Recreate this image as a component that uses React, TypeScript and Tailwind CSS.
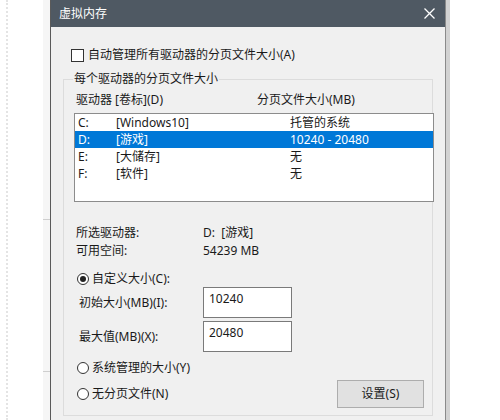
import { ReactNode } from "react";

const drives = [
  { letter: "C:", label: "[Windows10]", size: "托管的系统" },
  { letter: "D:", label: "[游戏]", size: "10240 - 20480", selected: true },
  { letter: "E:", label: "[大储存]", size: "无" },
  { letter: "F:", label: "[软件]", size: "无" },
];

const Radio = ({ checked, children }: { checked?: boolean; children: ReactNode }) => (
  <div className="flex items-center h-[16px]">
    <span className="w-[12px] h-[12px] rounded-full border border-[#333] bg-white flex items-center justify-center">
      {checked && <span className="w-[6px] h-[6px] rounded-full bg-[#222]" />}
    </span>
    <span className="ml-[3px]">{children}</span>
  </div>
);

const SizeField = ({ label, value }: { label: string; value: string }) => (
  <div className="flex items-center pl-[15px]">
    <span className="w-[124px]">{label}</span>
    <div className="w-[89px] h-[31px] border border-[#7a7a7a] bg-white pl-[5px] pt-[3px] leading-[16px]">
      {value}
    </div>
  </div>
);

export default function App() {
  return (
    <div className="w-[500px] h-[420px] bg-white flex overflow-hidden text-[12px] leading-[16px] text-[#1a1a1a] font-['Noto_Sans','Noto_Sans_CJK_SC',sans-serif]">
      {/* page edge behind the dialog */}
      <div className="w-[50px] flex">
        <div className="w-[6px]" />
        <div className="w-[37px] border-l-2 border-dotted border-[#e4e4e4]" />
        <div className="w-[7px] bg-[#f6f6f6] flex flex-col">
          <div className="h-[219px]" />
          <div className="h-[1px] bg-[#cfcfcf]" />
          <div className="h-[151px]" />
          <div className="h-[1px] bg-[#cfcfcf]" />
        </div>
      </div>

      {/* dialog */}
      <div className="w-[395px] border-l border-[#5a5a5a] bg-[#f0f0f0] flex flex-col">
        <div className="h-[27px] bg-[#4f5963] flex items-center justify-between pl-[8px] pr-[10px] text-white">
          <span>虚拟内存</span>
          <svg width="11" height="11" viewBox="0 0 11 11" className="mr-[0px]">
            <path d="M0.5 0.5 L10.5 10.5 M10.5 0.5 L0.5 10.5" stroke="#fff" strokeWidth="1.3" />
          </svg>
        </div>

        <div className="flex items-center h-[16px] mt-[20px] ml-[20px]">
          <span className="w-[13px] h-[13px] border border-[#333] bg-white" />
          <span className="ml-[4px]">自动管理所有驱动器的分页文件大小(A)</span>
        </div>

        {/* group box */}
        <div className="relative ml-[12px] mt-[16px] w-[370px] h-[337px] border border-[#dcdcdc]">
          <span className="absolute -top-[9px] left-[9px] px-[1px] bg-[#f0f0f0]">
            每个驱动器的分页文件大小
          </span>

          <div className="flex pl-[12px] pt-[12px]">
            <span className="w-[181px]">驱动器 [卷标](D)</span>
            <span>分页文件大小(MB)</span>
          </div>

          <div className="ml-[10px] mt-[5px] w-[360px] h-[89px] border border-[#8c8c8c] bg-white">
            {drives.map((d) => (
              <div
                key={d.letter}
                className={`flex items-center h-[17px] pl-[3px] ${
                  d.selected ? "bg-[#0078d7] text-white" : ""
                }`}
              >
                <span className="w-[38px]">{d.letter}</span>
                <span className="w-[174px]">{d.label}</span>
                <span>{d.size}</span>
              </div>
            ))}
          </div>

          <div className="pl-[12px] mt-[22px]">
            <div className="flex items-center h-[18px]">
              <span className="w-[127px]">所选驱动器:</span>
              <span>D:&nbsp;&nbsp;[游戏]</span>
            </div>
            <div className="flex items-center h-[18px]">
              <span className="w-[127px]">可用空间:</span>
              <span>54239 MB</span>
            </div>
          </div>

          <div className="pl-[13px] mt-[11px]">
            <Radio checked>自定义大小(C):</Radio>
          </div>

          <div className="flex flex-col gap-[3px]">
            <SizeField label="初始大小(MB)(I):" value="10240" />
            <SizeField label="最大值(MB)(X):" value="20480" />
          </div>

          <div className="pl-[13px] mt-[8px]">
            <Radio>系统管理的大小(Y)</Radio>
          </div>

          <div className="flex items-center justify-between pl-[13px] pr-[8px] mt-[4px]">
            <Radio>无分页文件(N)</Radio>
            <button className="w-[87px] h-[28px] bg-[#e1e1e1] border border-[#adadad] text-[#1a1a1a]">
              设置(S)
            </button>
          </div>
        </div>
      </div>

      {/* dialog shadow edge */}
      <div className="w-[5px] border-l border-[#8a8a8a] bg-[#d2d2d2]" />
    </div>
  );
}
